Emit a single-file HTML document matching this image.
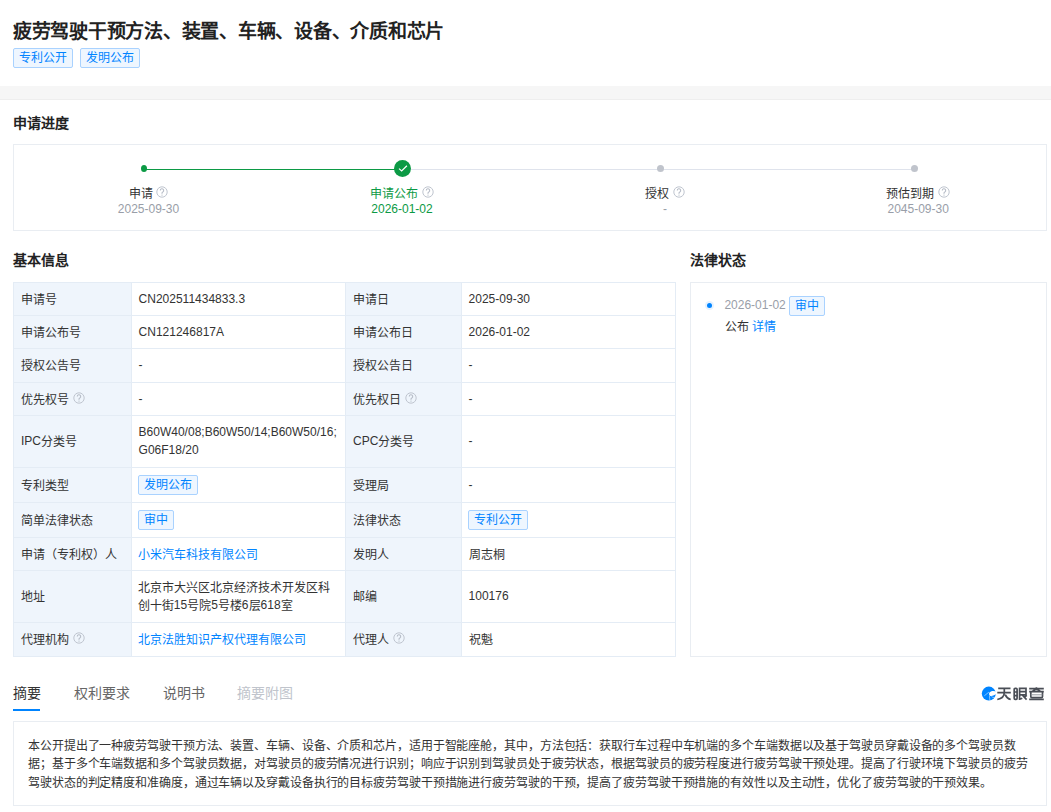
<!DOCTYPE html>
<html lang="zh-CN"><head><meta charset="utf-8"><style>
*{margin:0;padding:0;box-sizing:border-box}
html,body{width:1051px;height:812px;overflow:hidden;background:#fff}
body{position:relative;font-family:"Liberation Sans",sans-serif;color:#333;font-size:12px;line-height:18px}
.a{position:absolute;white-space:nowrap}
.title{left:13px;top:18px;font-size:19px;letter-spacing:-0.26px;line-height:26px;font-weight:bold;color:#222}
.tag{--ky:0px;display:inline-block;height:20px;border:1px solid #a9d2ff;background:#eef6ff;color:#0084ff;border-radius:2px;font-size:12px;line-height:18px;text-align:center;white-space:nowrap;padding:0 5px}
.band{left:0;top:86px;width:1051px;height:14px;background:#f6f6f6;border-bottom:1px solid #eeeeee}
.h{font-size:14px;font-weight:bold;line-height:20px;color:#222;--ky:0px}
.box{position:absolute;border:1px solid #e9edf2}
.qi{display:inline-block;vertical-align:middle;margin-left:3.5px;position:relative;top:-1.5px}
.pl{position:absolute;width:200px;text-align:center;font-size:12px;line-height:16px;color:#333;white-space:nowrap}
.pd{position:absolute;width:200px;text-align:center;font-size:12px;line-height:16px;color:#999ea8;white-space:nowrap}
.hl{position:absolute;background:#e4ecf5}
.lb{position:absolute;background:#eff5fc}
.c{position:absolute;white-space:nowrap;font-size:12px;line-height:18px;color:#333}
.blue{color:#0084ff}
.k{font-style:normal;position:relative;top:var(--ky,1px)}
.tab{position:absolute;top:682px;font-size:14px;line-height:20px;color:#666;white-space:nowrap}
.abs{--ky:0.5px;position:absolute;left:28px;top:736px;font-size:12px;line-height:18.5px;letter-spacing:-0.1px;color:#333;white-space:nowrap}
</style></head><body>
<div class="a title"><i class="k">疲劳驾驶干预方法、装置、车辆、设备、介质和芯片</i></div>
<div class="a" style="left:13px;top:48px"><span class="tag"><i class="k">专利公开</i></span></div>
<div class="a" style="left:80px;top:48px"><span class="tag"><i class="k">发明公布</i></span></div>
<div class="a band"></div>
<div class="a h" style="left:13px;top:113px"><i class="k">申请进度</i></div>
<div class="box" style="left:13px;top:144px;width:1034px;height:87px"></div>
<div class="a" style="left:144px;top:169px;width:258px;height:1px;background:#0c9a45"></div>
<div class="a" style="left:402px;top:169px;width:512px;height:1px;background:#dfe3ec"></div>
<div class="a" style="left:141px;top:165px;width:6px;height:7px;border-radius:50%;background:#0c9a45"></div>
<svg class="a" style="left:394px;top:160px" width="17" height="17" viewBox="0 0 17 17"><circle cx="8.5" cy="8.5" r="8.5" fill="#0c9a45"/><path d="M5 8.6L7.65 10.9L12.9 5.7" fill="none" stroke="#fff" stroke-width="1.2"/></svg>
<div class="a" style="left:657px;top:165px;width:7px;height:7px;border-radius:50%;background:#c0c4cc"></div>
<div class="a" style="left:911px;top:165px;width:7px;height:7px;border-radius:50%;background:#c0c4cc"></div>
<div class="pl" style="left:48.5px;top:185px;color:#333"><i class="k">申请</i><svg class="qi" width="12" height="12" viewBox="0 0 12 12"><circle cx="6" cy="6" r="5.2" fill="none" stroke="#bfc5cf" stroke-width="1"/><path d="M4.3 4.5a1.7 1.7 0 1 1 2.5 1.5c-.6.3-.8.6-.8 1.1v.6" fill="none" stroke="#b5bbc6" stroke-width="1.1"/><circle cx="6" cy="9.1" r=".65" fill="#b5bbc6"/></svg></div>
<div class="pd" style="left:48.5px;top:201px;color:#999ea8">2025-09-30</div>
<div class="pl" style="left:302px;top:185px;color:#0c9a45"><i class="k">申请公布</i><svg class="qi" width="12" height="12" viewBox="0 0 12 12"><circle cx="6" cy="6" r="5.2" fill="none" stroke="#bfc5cf" stroke-width="1"/><path d="M4.3 4.5a1.7 1.7 0 1 1 2.5 1.5c-.6.3-.8.6-.8 1.1v.6" fill="none" stroke="#b5bbc6" stroke-width="1.1"/><circle cx="6" cy="9.1" r=".65" fill="#b5bbc6"/></svg></div>
<div class="pd" style="left:302px;top:201px;color:#0c9a45">2026-01-02</div>
<div class="pl" style="left:565px;top:185px;color:#333"><i class="k">授权</i><svg class="qi" width="12" height="12" viewBox="0 0 12 12"><circle cx="6" cy="6" r="5.2" fill="none" stroke="#bfc5cf" stroke-width="1"/><path d="M4.3 4.5a1.7 1.7 0 1 1 2.5 1.5c-.6.3-.8.6-.8 1.1v.6" fill="none" stroke="#b5bbc6" stroke-width="1.1"/><circle cx="6" cy="9.1" r=".65" fill="#b5bbc6"/></svg></div>
<div class="pd" style="left:565px;top:201px;color:#999ea8">-</div>
<div class="pl" style="left:818.2px;top:185px;color:#333"><i class="k">预估到期</i><svg class="qi" width="12" height="12" viewBox="0 0 12 12"><circle cx="6" cy="6" r="5.2" fill="none" stroke="#bfc5cf" stroke-width="1"/><path d="M4.3 4.5a1.7 1.7 0 1 1 2.5 1.5c-.6.3-.8.6-.8 1.1v.6" fill="none" stroke="#b5bbc6" stroke-width="1.1"/><circle cx="6" cy="9.1" r=".65" fill="#b5bbc6"/></svg></div>
<div class="pd" style="left:818.2px;top:201px;color:#999ea8">2045-09-30</div>
<div class="a h" style="left:13px;top:250px"><i class="k">基本信息</i></div>
<div class="a h" style="left:690px;top:250px"><i class="k">法律状态</i></div>
<div class="lb" style="left:14px;top:283px;width:117px;height:32px"></div>
<div class="lb" style="left:346px;top:283px;width:115px;height:32px"></div>
<div class="lb" style="left:14px;top:316px;width:117px;height:32px"></div>
<div class="lb" style="left:346px;top:316px;width:115px;height:32px"></div>
<div class="lb" style="left:14px;top:349px;width:117px;height:33px"></div>
<div class="lb" style="left:346px;top:349px;width:115px;height:33px"></div>
<div class="lb" style="left:14px;top:383px;width:117px;height:32px"></div>
<div class="lb" style="left:346px;top:383px;width:115px;height:32px"></div>
<div class="lb" style="left:14px;top:416px;width:117px;height:51px"></div>
<div class="lb" style="left:346px;top:416px;width:115px;height:51px"></div>
<div class="lb" style="left:14px;top:468px;width:117px;height:34px"></div>
<div class="lb" style="left:346px;top:468px;width:115px;height:34px"></div>
<div class="lb" style="left:14px;top:503px;width:117px;height:34px"></div>
<div class="lb" style="left:346px;top:503px;width:115px;height:34px"></div>
<div class="lb" style="left:14px;top:538px;width:117px;height:32px"></div>
<div class="lb" style="left:346px;top:538px;width:115px;height:32px"></div>
<div class="lb" style="left:14px;top:571px;width:117px;height:51px"></div>
<div class="lb" style="left:346px;top:571px;width:115px;height:51px"></div>
<div class="lb" style="left:14px;top:623px;width:117px;height:33px"></div>
<div class="lb" style="left:346px;top:623px;width:115px;height:33px"></div>
<div class="hl" style="left:13px;top:282px;width:663px;height:1px"></div>
<div class="hl" style="left:13px;top:315px;width:663px;height:1px"></div>
<div class="hl" style="left:13px;top:348px;width:663px;height:1px"></div>
<div class="hl" style="left:13px;top:382px;width:663px;height:1px"></div>
<div class="hl" style="left:13px;top:415px;width:663px;height:1px"></div>
<div class="hl" style="left:13px;top:467px;width:663px;height:1px"></div>
<div class="hl" style="left:13px;top:502px;width:663px;height:1px"></div>
<div class="hl" style="left:13px;top:537px;width:663px;height:1px"></div>
<div class="hl" style="left:13px;top:570px;width:663px;height:1px"></div>
<div class="hl" style="left:13px;top:622px;width:663px;height:1px"></div>
<div class="hl" style="left:13px;top:656px;width:663px;height:1px"></div>
<div class="hl" style="left:13px;top:282px;width:1px;height:375px"></div>
<div class="hl" style="left:131px;top:282px;width:1px;height:375px"></div>
<div class="hl" style="left:345px;top:282px;width:1px;height:375px"></div>
<div class="hl" style="left:461px;top:282px;width:1px;height:375px"></div>
<div class="hl" style="left:675px;top:282px;width:1px;height:375px"></div>
<div class="c" style="left:21.0px;top:290px;width:110.0px"><i class="k">申请号</i></div>
<div class="c" style="left:138.6px;top:290px;width:206.4px">CN202511434833.3</div>
<div class="c" style="left:353.0px;top:290px;width:108.0px"><i class="k">申请日</i></div>
<div class="c" style="left:468.6px;top:290px;width:206.39999999999998px">2025-09-30</div>
<div class="c" style="left:21.0px;top:323px;width:110.0px"><i class="k">申请公布号</i></div>
<div class="c" style="left:138.6px;top:323px;width:206.4px">CN121246817A</div>
<div class="c" style="left:353.0px;top:323px;width:108.0px"><i class="k">申请公布日</i></div>
<div class="c" style="left:468.6px;top:323px;width:206.39999999999998px">2026-01-02</div>
<div class="c" style="left:21.0px;top:356px;width:110.0px"><i class="k">授权公告号</i></div>
<div class="c" style="left:138.6px;top:356px;width:206.4px">-</div>
<div class="c" style="left:353.0px;top:356px;width:108.0px"><i class="k">授权公告日</i></div>
<div class="c" style="left:468.6px;top:356px;width:206.39999999999998px">-</div>
<div class="c" style="left:21.0px;top:390px;width:110.0px"><i class="k">优先权号</i><svg class="qi" width="12" height="12" viewBox="0 0 12 12"><circle cx="6" cy="6" r="5.2" fill="none" stroke="#bfc5cf" stroke-width="1"/><path d="M4.3 4.5a1.7 1.7 0 1 1 2.5 1.5c-.6.3-.8.6-.8 1.1v.6" fill="none" stroke="#b5bbc6" stroke-width="1.1"/><circle cx="6" cy="9.1" r=".65" fill="#b5bbc6"/></svg></div>
<div class="c" style="left:138.6px;top:390px;width:206.4px">-</div>
<div class="c" style="left:353.0px;top:390px;width:108.0px"><i class="k">优先权日</i><svg class="qi" width="12" height="12" viewBox="0 0 12 12"><circle cx="6" cy="6" r="5.2" fill="none" stroke="#bfc5cf" stroke-width="1"/><path d="M4.3 4.5a1.7 1.7 0 1 1 2.5 1.5c-.6.3-.8.6-.8 1.1v.6" fill="none" stroke="#b5bbc6" stroke-width="1.1"/><circle cx="6" cy="9.1" r=".65" fill="#b5bbc6"/></svg></div>
<div class="c" style="left:468.6px;top:390px;width:206.39999999999998px">-</div>
<div class="c" style="left:21.0px;top:432px;width:110.0px">IPC<i class="k">分类号</i></div>
<div class="c" style="left:138.6px;top:423px;width:206.4px">B60W40/08;B60W50/14;B60W50/16;<br>G06F18/20</div>
<div class="c" style="left:353.0px;top:432px;width:108.0px">CPC<i class="k">分类号</i></div>
<div class="c" style="left:468.6px;top:432px;width:206.39999999999998px">-</div>
<div class="c" style="left:21.0px;top:476px;width:110.0px"><i class="k">专利类型</i></div>
<div class="c" style="left:138.6px;top:475px;width:206.4px"><span class="tag" style="height:20px;line-height:18px;padding:0 5px;margin-left:-1px"><i class="k">发明公布</i></span></div>
<div class="c" style="left:353.0px;top:476px;width:108.0px"><i class="k">受理局</i></div>
<div class="c" style="left:468.6px;top:476px;width:206.39999999999998px">-</div>
<div class="c" style="left:21.0px;top:511px;width:110.0px"><i class="k">简单法律状态</i></div>
<div class="c" style="left:138.6px;top:510px;width:206.4px"><span class="tag" style="height:20px;line-height:18px;padding:0 5px;margin-left:-1px"><i class="k">审中</i></span></div>
<div class="c" style="left:353.0px;top:511px;width:108.0px"><i class="k">法律状态</i></div>
<div class="c" style="left:468.6px;top:510px;width:206.39999999999998px"><span class="tag" style="height:20px;line-height:18px;padding:0 5px;margin-left:-1px"><i class="k">专利公开</i></span></div>
<div class="c" style="left:21.0px;top:545px;width:110.0px"><i class="k">申请（专利权）人</i></div>
<div class="c" style="left:137.8px;top:545px;width:207.2px"><span class="blue"><i class="k">小米汽车科技有限公司</i></span></div>
<div class="c" style="left:353.0px;top:545px;width:108.0px"><i class="k">发明人</i></div>
<div class="c" style="left:468.6px;top:545px;width:206.39999999999998px"><i class="k">周志桐</i></div>
<div class="c" style="left:21.0px;top:587px;width:110.0px"><i class="k">地址</i></div>
<div class="c" style="left:137.8px;top:578px;width:207.2px"><i class="k">北京市大兴区北京经济技术开发区科</i><br><i class="k">创十街</i>15<i class="k">号院</i>5<i class="k">号楼</i>6<i class="k">层</i>618<i class="k">室</i></div>
<div class="c" style="left:353.0px;top:587px;width:108.0px"><i class="k">邮编</i></div>
<div class="c" style="left:468.6px;top:587px;width:206.39999999999998px">100176</div>
<div class="c" style="left:21.0px;top:630px;width:110.0px"><i class="k">代理机构</i><svg class="qi" width="12" height="12" viewBox="0 0 12 12"><circle cx="6" cy="6" r="5.2" fill="none" stroke="#bfc5cf" stroke-width="1"/><path d="M4.3 4.5a1.7 1.7 0 1 1 2.5 1.5c-.6.3-.8.6-.8 1.1v.6" fill="none" stroke="#b5bbc6" stroke-width="1.1"/><circle cx="6" cy="9.1" r=".65" fill="#b5bbc6"/></svg></div>
<div class="c" style="left:137.8px;top:630px;width:207.2px"><span class="blue"><i class="k">北京法胜知识产权代理有限公司</i></span></div>
<div class="c" style="left:353.0px;top:630px;width:108.0px"><i class="k">代理人</i><svg class="qi" width="12" height="12" viewBox="0 0 12 12"><circle cx="6" cy="6" r="5.2" fill="none" stroke="#bfc5cf" stroke-width="1"/><path d="M4.3 4.5a1.7 1.7 0 1 1 2.5 1.5c-.6.3-.8.6-.8 1.1v.6" fill="none" stroke="#b5bbc6" stroke-width="1.1"/><circle cx="6" cy="9.1" r=".65" fill="#b5bbc6"/></svg></div>
<div class="c" style="left:468.6px;top:630px;width:206.39999999999998px"><i class="k">祝魁</i></div>
<div class="box" style="left:690px;top:282px;width:357px;height:375px"></div>
<div class="a" style="left:705px;top:301px;width:9px;height:9px;border-radius:50%;background:#e6f2ff"></div>
<div class="a" style="left:707px;top:303px;width:5px;height:5px;border-radius:50%;background:#0084ff"></div>
<div class="c" style="left:724.4px;top:296px;color:#999ea8">2026-01-02</div>
<div class="a" style="left:789px;top:296px"><span class="tag" style="height:20px;line-height:18px;padding:0 5px"><i class="k">审中</i></span></div>
<div class="c" style="left:725px;top:317px"><i class="k">公布</i> <span class="blue"><i class="k">详情</i></span></div>
<div class="tab" style="left:13px;color:#333"><i class="k">摘要</i></div>
<div class="a" style="left:13px;top:709px;width:27px;height:2px;background:#0084ff"></div>
<div class="tab" style="left:74px"><i class="k">权利要求</i></div>
<div class="tab" style="left:163px"><i class="k">说明书</i></div>
<div class="tab" style="left:237px;color:#c0c4cc"><i class="k">摘要附图</i></div>
<svg class="a" style="left:981px;top:686px" width="16" height="16" viewBox="0 0 16 16"><circle cx="7.8" cy="7.6" r="7" fill="#0084ff"/><path d="M15.8 5.9C13.2 4.5 9.6 4.8 8.5 6.6C7.7 8 8.1 9.6 9.4 10C11.2 10.4 13.8 9.2 15.8 7.3Z" fill="#fff"/><path d="M3.3 9.8L7.9 6.1M8.5 9.6L8.8 14.2M10.4 10.5Q11.6 11.5 13.3 11.6" fill="none" stroke="#fff" stroke-width="0.6" opacity="0.85"/></svg>
<svg class="a" style="left:997px;top:687px" width="48" height="14" viewBox="0 0 48 14"><g fill="none" stroke="#4a4e56" stroke-width="1.7" stroke-linecap="butt"><path d="M1.2 1.4H13.5M0.3 5.6H13.8M7.3 1.4V5.6C7.3 9 4.5 11.8 0.3 12.5M8.2 7.6C9.2 10 11 11.8 13.7 12.5"/><rect x="17.2" y="1.3" width="2.9" height="11" rx="1"/><path d="M17.2 5H20.1M17.2 8.6H20.1"/><path d="M22.6 0.6V12.9M22.6 1.3H29V7.9H22.6M22.6 4.6H29M25.2 8L29.6 12.6M22.6 12.3L25.3 11.2M29.8 8.3L27.6 10"/><path d="M32.2 1.7H46.8M39.4 0.2V3.3M39.4 1.7L35.3 4.4M39.4 1.7L43.5 4.4M32.2 4.6H46.8M33.8 4.6V9.4Q33.8 10.5 34.9 10.5H44.4Q45.5 10.5 45.5 9.4V4.6M32.2 12.4H46.8"/><path d="M33.8 7.8H45.5" stroke-width="0.9" stroke="#8a8e96"/></g></svg>
<div class="box" style="left:13px;top:721px;width:1034px;height:85px"></div>
<div class="abs"><i class="k">本公开提出了一种疲劳驾驶干预方法、装置、车辆、设备、介质和芯片，适用于智能座舱，其中，方法包括：获取行车过程中车机端的多个车端数据以及基于驾驶员穿戴设备的多个驾驶员数</i><br><i class="k">据；基于多个车端数据和多个驾驶员数据，对驾驶员的疲劳情况进行识别；响应于识别到驾驶员处于疲劳状态，根据驾驶员的疲劳程度进行疲劳驾驶干预处理。提高了行驶环境下驾驶员的疲劳</i><br><i class="k">驾驶状态的判定精度和准确度，通过车辆以及穿戴设备执行的目标疲劳驾驶干预措施进行疲劳驾驶的干预，提高了疲劳驾驶干预措施的有效性以及主动性，优化了疲劳驾驶的干预效果。</i></div>
</body></html>
